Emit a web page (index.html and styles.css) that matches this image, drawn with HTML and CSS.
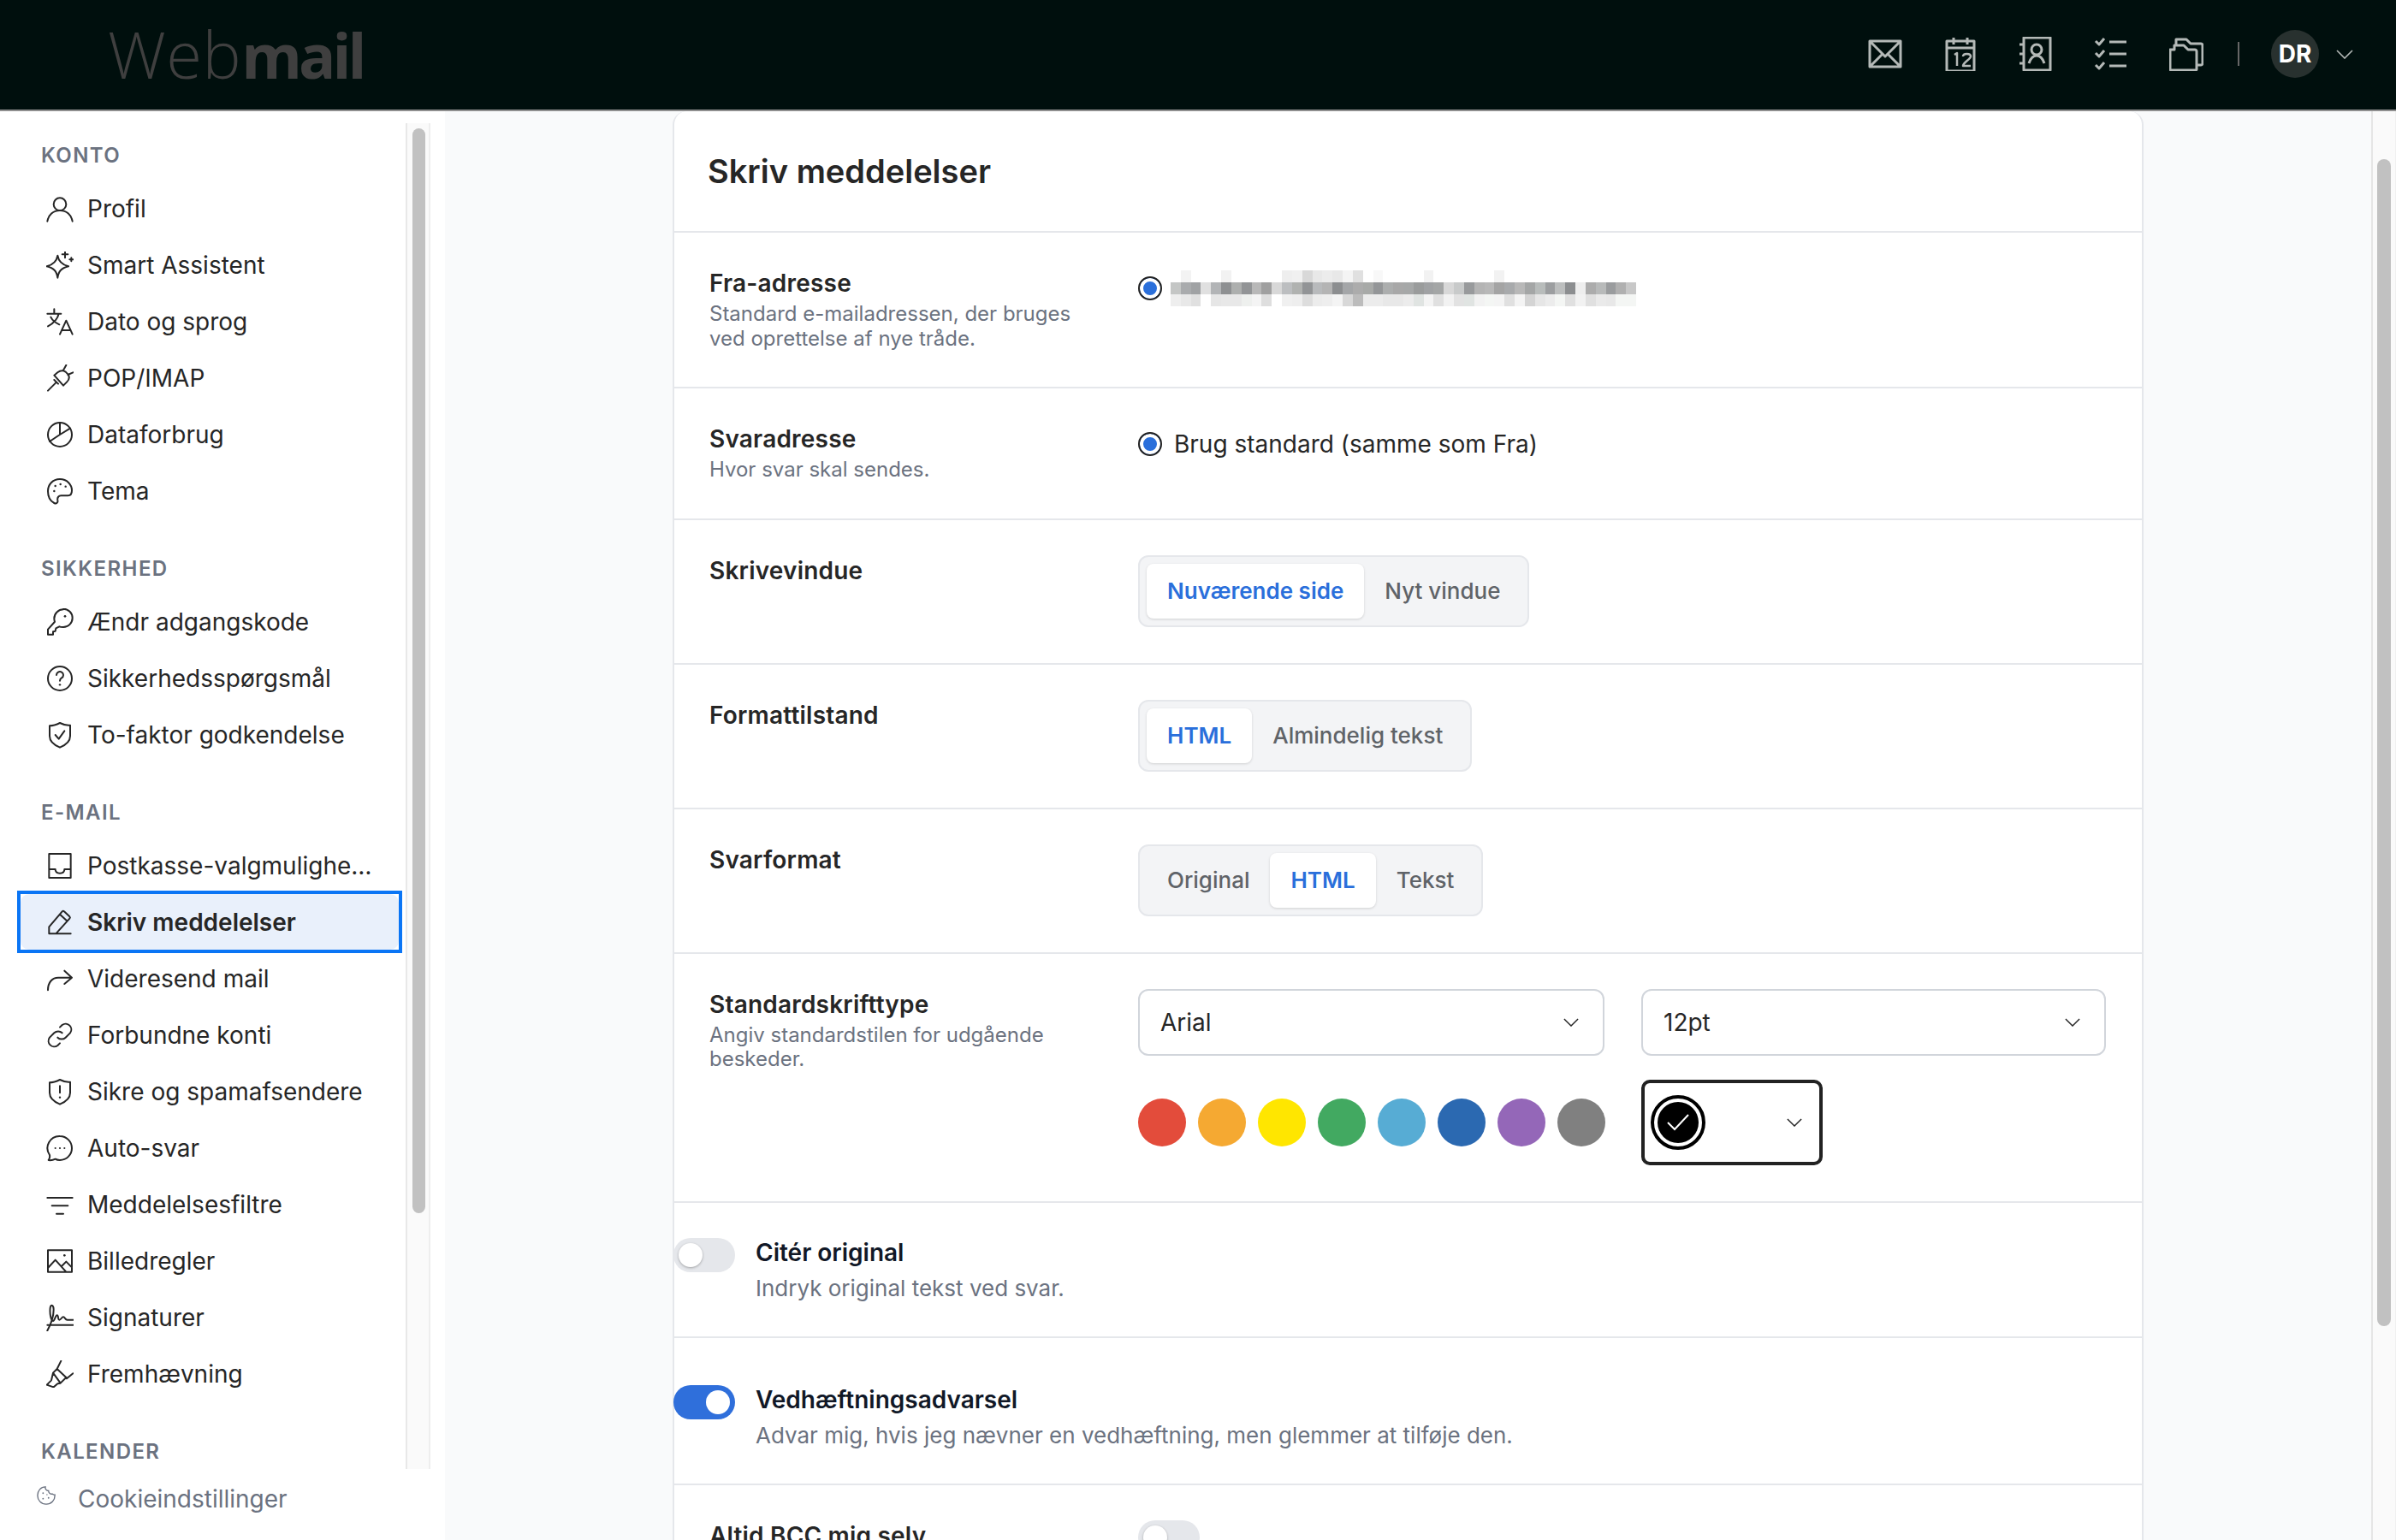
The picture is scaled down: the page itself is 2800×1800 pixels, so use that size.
FILE: index.html
```html
<!DOCTYPE html>
<html lang="da">
<head>
    <meta charset="UTF-8">
    <title>Skriv meddelelser</title>
    <link rel="stylesheet" href="styles.css">
</head>
<body>
    <header class="topbar">
        <div class="logo"><span class="logo-light">Web</span><span class="logo-bold">mail</span></div>
        <div class="top-actions">
            <svg class="top-icon" viewBox="0 0 40 40"><path d="M2 5h36v30H2zM2 5l18 18L38 5M2 35l15-15M38 35L23 20"/></svg>
            <svg class="top-icon" viewBox="0 0 40 40"><path d="M4 5h32v35H4zM4 13h32M12 1v8M28 1v8"/><path class="thin" d="M13 21l3-2v15M23 23c0-4 9-4 9 0 0 3-9 7-9 11h9"/></svg>
            <svg class="top-icon" viewBox="0 0 40 40"><path d="M6 1h31v38H6zM1 9h5M1 20h5M1 31h5"/><circle cx="21" cy="15" r="6"/><path d="M12 31c2-6 5-9 9-9s7 3 9 9"/></svg>
            <svg class="top-icon" viewBox="0 0 40 40"><path d="M2 5l4 4 6-7M2 19l4 4 6-7M2 33l4 4 6-7M18 6h20M18 20h20M18 34h20"/></svg>
            <svg class="top-icon" viewBox="0 0 40 40"><path d="M1 15h5V10h11l5 5h8c1 0 2 1 2 2v21c0 1-1 1-2 1H3c-1 0-2 0-2-1zM8 10V3h12l5 5h12c1 0 2 1 2 2v21c0 1-1 2-2 2h-5"/></svg>
            <span class="top-divider"></span>
            <span class="avatar">DR</span>
            <svg class="user-chevron" viewBox="0 0 20 11"><path d="M1 1l9 9 9-9"/></svg>
        </div>
    </header>

    <div class="layout">
        <aside class="sidebar">
            <div class="sidebar-scroll">
                <nav class="nav">
                    <h4 class="nav-label">Konto</h4>
                    <a class="nav-item"><svg class="nav-icon" viewBox="0 0 24 24"><circle cx="12" cy="8" r="5.500"/><path d="M1 23c1-5.500 5-9.500 11-9.500s10 4 11 9.500"/></svg><span>Profil</span></a>
                    <a class="nav-item"><svg class="nav-icon" viewBox="0 0 24 24"><path d="M10 3.500c.8 5 3.500 8 9.500 9.500-6 1.500-8.700 4-9.500 10-.8-6-3.500-8.500-9.500-10 6-1.500 8.700-4.500 9.500-9.500zM16.500 0v5.500M14 2.500h5M22 5.500v3M20.500 7h3"/></svg><span>Smart Assistent</span></a>
                    <a class="nav-item"><svg class="nav-icon" viewBox="0 0 24 24"><path d="M1 5h12M7 1v4M11 5c-1 4.500-4 8-9.500 11M4 8c1.500 3 4 5 7.500 6.500M12 23l5.500-12 5.500 12M13.500 19.500h8"/></svg><span>Dato og sprog</span></a>
                    <a class="nav-item"><svg class="nav-icon" viewBox="0 0 24 24"><path d="M7 9.500l8 9 3-3c2.500-2.500 2.500-5 1-7l-2-2c-2-1.500-4.500-1.500-7 .5zM15 5l2.500-4.500M19 9l4.500-2M10.500 17L7 13.500M9 15.500L1.500 23"/></svg><span>POP/IMAP</span></a>
                    <a class="nav-item"><svg class="nav-icon" viewBox="0 0 24 24"><circle cx="12" cy="12" r="10.500"/><path d="M12 1.500V12l-9 6M12 12l9-5.500"/></svg><span>Dataforbrug</span></a>
                    <a class="nav-item"><svg class="nav-icon" viewBox="0 0 24 24"><path d="M12 1.500C5.500 1.500 1.500 6.500 1.500 12c0 5.500 2.500 9 5.500 10.500 2 1 3.500-.5 3-2.500-.5-2.500 1-4 3-4h6c2.500 0 3.500-2 3.500-4.500C22.500 6 18 1.500 12 1.500z"/><circle class="dot" cx="7" cy="12" r=".9"/><circle class="dot" cx="8" cy="7.500" r=".9"/><circle class="dot" cx="12.500" cy="6" r=".9"/><circle class="dot" cx="17" cy="8" r=".9"/></svg><span>Tema</span></a>

                    <h4 class="nav-label">Sikkerhed</h4>
                    <a class="nav-item"><svg class="nav-icon" viewBox="0 0 24 24"><path d="M15 1a8 8 0 0 0-8 8c0 1 .2 2 .5 2.800L1.500 18.500V23H6v-2.500l2-.5.500-2.500 3-1.500c1 .5 2.200.5 3.500.5a8 8 0 0 0 0-16z"/><circle class="dot" cx="16.500" cy="7" r="1"/></svg><span>Ændr adgangskode</span></a>
                    <a class="nav-item"><svg class="nav-icon" viewBox="0 0 24 24"><circle cx="12" cy="12" r="10.500"/><path d="M9 9a3 3 0 1 1 4.500 2.600c-1 .6-1.500 1.200-1.500 2.400"/><circle class="dot" cx="12" cy="17.500" r=".9"/></svg><span>Sikkerhedsspørgsmål</span></a>
                    <a class="nav-item"><svg class="nav-icon" viewBox="0 0 24 24"><path d="M3 4c4 0 6-1 9-2.500C15 3 17 4 21 3.500V13c0 4.500-4 8-9 10-5-2-9-5.500-9-10zM8 12l3 3.500 5-7"/></svg><span>To-faktor godkendelse</span></a>

                    <h4 class="nav-label">E-mail</h4>
                    <a class="nav-item"><svg class="nav-icon" viewBox="0 0 24 24"><path d="M2.500 1.500h19v21h-19zM2.500 15H8c0 2.500 2 3.500 4 3.500s4-1 4-3.500h5.500"/></svg><span class="nav-text">Postkasse-valgmuligheder</span></a>
                    <a class="nav-item active"><svg class="nav-icon" viewBox="0 0 24 24"><path d="M2.500 22v-6L14 2.500c.5-.5 1.200-.5 1.700 0l4.800 4.500c.5.500.5 1.200 0 1.700L8.500 22zM2.500 22h19M12 5l6.500 6"/></svg><span>Skriv meddelelser</span></a>
                    <a class="nav-item"><svg class="nav-icon" viewBox="0 0 24 24"><path d="M1.500 22c0-7 4-11 9-11h12M16 5l6.500 6-6.500 5.500"/></svg><span>Videresend mail</span></a>
                    <a class="nav-item"><svg class="nav-icon" viewBox="0 0 24 24"><path d="M10 14a5 5 0 0 0 7 0l4-4a5 5 0 0 0-7-7l-2 2M14 10a5 5 0 0 0-7 0l-4 4a5 5 0 0 0 7 7l2-2"/></svg><span>Forbundne konti</span></a>
                    <a class="nav-item"><svg class="nav-icon" viewBox="0 0 24 24"><path d="M3 4c4 0 6-1 9-2.500C15 3 17 4 21 3.500V13c0 4.500-4 8-9 10-5-2-9-5.500-9-10zM12 7v6"/><circle class="dot" cx="12" cy="17" r=".9"/></svg><span>Sikre og spamafsendere</span></a>
                    <a class="nav-item"><svg class="nav-icon" viewBox="0 0 24 24"><path d="M12 1.500a10.500 10.500 0 0 1 0 21c-1.500 0-3-.3-4-1-2 1-4 1.300-6 1 1-1.200 1.300-2.800 1-4.500A10.500 10.500 0 0 1 12 1.500z"/><circle class="dot" cx="8" cy="12" r=".8"/><circle class="dot" cx="12" cy="12" r=".8"/><circle class="dot" cx="16" cy="12" r=".8"/></svg><span>Auto-svar</span></a>
                    <a class="nav-item"><svg class="nav-icon" viewBox="0 0 24 24"><path d="M1 6h22M5 13h14M9 20h6"/></svg><span>Meddelelsesfiltre</span></a>
                    <a class="nav-item"><svg class="nav-icon" viewBox="0 0 24 24"><path d="M1.500 2.500h21v19h-21zM1.500 18l6.500-7 9.500 10.500M13.500 16.500l4-4 5 5"/><circle class="dot" cx="16" cy="7" r="1"/></svg><span>Billedregler</span></a>
                    <a class="nav-item"><svg class="nav-icon" viewBox="0 0 24 24"><path d="M1 23.500C4 18 6.500 10 6.500 5c0-4-2.500-5-3-1.500C3 8 4 15 6 15c1.500 0 2-5 3.500-5S10 14 11.500 14s2-2.500 3.500-2.500 1.500 2.500 3.500 2.500h5M1 18.500h22.500"/></svg><span>Signaturer</span></a>
                    <a class="nav-item"><svg class="nav-icon" viewBox="0 0 24 24"><path d="M13 .5L9.500 7.500M6 11l3.500-3.500 8 7.500-5 5zM6 11l-1.500 6.500L.5 21.500l6 2 3.500-3 2.500-.5M18 16l5.500-4.500"/></svg><span>Fremhævning</span></a>

                    <h4 class="nav-label">Kalender</h4>
                </nav>
                <div class="side-track"><div class="side-thumb"></div></div>
            </div>
            <div class="cookie-bar">
                <svg class="cookie-icon" viewBox="0 0 24 24"><path d="M11 1a4 4 0 0 0 4 5 4 4 0 0 0 5 4 3 3 0 0 0 3 1c.5 7-4.500 12-11 12S1 18 1 12 5 1 11 1z"/><circle class="dot" cx="8" cy="9" r="1"/><circle class="dot" cx="15" cy="15" r="1"/><circle class="dot" cx="8" cy="16" r="1"/><circle class="dot" cx="13" cy="11" r=".8"/></svg>
                <span>Cookieindstillinger</span>
            </div>
        </aside>

        <main class="main">
            <div class="content">
                <section class="card">
                    <h2 class="card-title">Skriv meddelelser</h2>

                    <div class="row">
                        <div>
                            <div class="row-label">Fra-adresse</div>
                            <div class="row-help">Standard e-mailadressen, der bruges ved oprettelse af nye tråde.</div>
                        </div>
                        <div class="radio-line">
                            <span class="radio"></span>
                            <svg class="mosaic" viewBox="0 0 46 3" preserveAspectRatio="none" shape-rendering="crispEdges">
                                <g class="m-top">
                                    <rect x="1" y="0" width="1" height="1" fill="#f3f3f3"/><rect x="5" y="0" width="1" height="1" fill="#f2f2f2"/><rect x="11" y="0" width="1" height="1" fill="#eeeeee"/><rect x="12" y="0" width="1" height="1" fill="#f0f0f0"/><rect x="13" y="0" width="1" height="1" fill="#d8d8d8"/><rect x="14" y="0" width="1" height="1" fill="#e8e8e8"/><rect x="15" y="0" width="1" height="1" fill="#ececec"/><rect x="16" y="0" width="1" height="1" fill="#e8e8e8"/><rect x="17" y="0" width="1" height="1" fill="#f4f4f4"/><rect x="18" y="0" width="1" height="1" fill="#e0e0e0"/><rect x="20" y="0" width="1" height="1" fill="#f8f8f8"/><rect x="25" y="0" width="1" height="1" fill="#f2f2f2"/><rect x="32" y="0" width="1" height="1" fill="#f2f2f2"/>
                                </g>
                                <g class="m-mid">
                                    <rect x="0" y="1" width="1" height="1" fill="#c4c6c5"/><rect x="1" y="1" width="1" height="1" fill="#a9abad"/><rect x="2" y="1" width="1" height="1" fill="#a0a2a4"/><rect x="3" y="1" width="1" height="1" fill="#e0e0e0"/><rect x="4" y="1" width="1" height="1" fill="#b2b4b6"/><rect x="5" y="1" width="1" height="1" fill="#8e9092"/><rect x="6" y="1" width="1" height="1" fill="#adafae"/><rect x="7" y="1" width="1" height="1" fill="#929496"/><rect x="8" y="1" width="1" height="1" fill="#b8b8b8"/><rect x="9" y="1" width="1" height="1" fill="#a0a0a0"/><rect x="10" y="1" width="1" height="1" fill="#d8d8d8"/><rect x="11" y="1" width="1" height="1" fill="#bcbec0"/><rect x="12" y="1" width="1" height="1" fill="#b0b2b0"/><rect x="13" y="1" width="1" height="1" fill="#929496"/><rect x="14" y="1" width="1" height="1" fill="#b8babc"/><rect x="15" y="1" width="1" height="1" fill="#b4b4b4"/><rect x="16" y="1" width="1" height="1" fill="#8c8e90"/><rect x="17" y="1" width="1" height="1" fill="#a4a6a8"/><rect x="18" y="1" width="1" height="1" fill="#acacac"/><rect x="19" y="1" width="1" height="1" fill="#a8aaa8"/><rect x="20" y="1" width="1" height="1" fill="#949698"/><rect x="21" y="1" width="1" height="1" fill="#acaeae"/><rect x="22" y="1" width="1" height="1" fill="#a8a8a8"/><rect x="23" y="1" width="1" height="1" fill="#a6a8a8"/><rect x="24" y="1" width="1" height="1" fill="#9a9c9c"/><rect x="25" y="1" width="1" height="1" fill="#a0a2a4"/><rect x="26" y="1" width="1" height="1" fill="#a4a6a6"/><rect x="27" y="1" width="1" height="1" fill="#d8d8d8"/><rect x="28" y="1" width="1" height="1" fill="#c8caca"/><rect x="29" y="1" width="1" height="1" fill="#989a9c"/><rect x="30" y="1" width="1" height="1" fill="#b4b4b4"/><rect x="31" y="1" width="1" height="1" fill="#b8b8b8"/><rect x="32" y="1" width="1" height="1" fill="#a4a4a4"/><rect x="33" y="1" width="1" height="1" fill="#a8aaac"/><rect x="34" y="1" width="1" height="1" fill="#b8b8b8"/><rect x="35" y="1" width="1" height="1" fill="#a4a6a6"/><rect x="36" y="1" width="1" height="1" fill="#b8bcbb"/><rect x="37" y="1" width="1" height="1" fill="#9c9ea0"/><rect x="38" y="1" width="1" height="1" fill="#bcbebe"/><rect x="39" y="1" width="1" height="1" fill="#8c8e90"/><rect x="40" y="1" width="1" height="1" fill="#eeeeee"/><rect x="41" y="1" width="1" height="1" fill="#acacac"/><rect x="42" y="1" width="1" height="1" fill="#b8baba"/><rect x="43" y="1" width="1" height="1" fill="#9a9c9e"/><rect x="44" y="1" width="1" height="1" fill="#b0b0b0"/><rect x="45" y="1" width="1" height="1" fill="#c8c8c8"/>
                                </g>
                                <g class="m-bottom">
                                    <rect x="0" y="2" width="1" height="1" fill="#eeeeee"/><rect x="1" y="2" width="1" height="1" fill="#e8e8e8"/><rect x="2" y="2" width="1" height="1" fill="#e0e0e0"/><rect x="4" y="2" width="1" height="1" fill="#e6e6e6"/><rect x="5" y="2" width="1" height="1" fill="#e8e8e8"/><rect x="6" y="2" width="1" height="1" fill="#e8e8e8"/><rect x="7" y="2" width="1" height="1" fill="#eef0ee"/><rect x="8" y="2" width="1" height="1" fill="#f4f4f4"/><rect x="9" y="2" width="1" height="1" fill="#dedede"/><rect x="11" y="2" width="1" height="1" fill="#f0f0f0"/><rect x="12" y="2" width="1" height="1" fill="#eeeeee"/><rect x="13" y="2" width="1" height="1" fill="#dddddd"/><rect x="14" y="2" width="1" height="1" fill="#ececec"/><rect x="15" y="2" width="1" height="1" fill="#eeeeee"/><rect x="16" y="2" width="1" height="1" fill="#f4f4f4"/><rect x="17" y="2" width="1" height="1" fill="#d8d8d8"/><rect x="18" y="2" width="1" height="1" fill="#bcbcbc"/><rect x="19" y="2" width="1" height="1" fill="#ececec"/><rect x="20" y="2" width="1" height="1" fill="#ececec"/><rect x="21" y="2" width="1" height="1" fill="#e8e8e8"/><rect x="22" y="2" width="1" height="1" fill="#e8e8e8"/><rect x="23" y="2" width="1" height="1" fill="#ececec"/><rect x="24" y="2" width="1" height="1" fill="#e0e4e2"/><rect x="25" y="2" width="1" height="1" fill="#f4f4f4"/><rect x="26" y="2" width="1" height="1" fill="#e0e0e0"/><rect x="27" y="2" width="1" height="1" fill="#f2f2f2"/><rect x="28" y="2" width="1" height="1" fill="#e2e2e2"/><rect x="29" y="2" width="1" height="1" fill="#e0e4e2"/><rect x="30" y="2" width="1" height="1" fill="#f2f2f2"/><rect x="31" y="2" width="1" height="1" fill="#f4f6f4"/><rect x="32" y="2" width="1" height="1" fill="#f4f4f4"/><rect x="33" y="2" width="1" height="1" fill="#e0e0e0"/><rect x="34" y="2" width="1" height="1" fill="#f4f4f4"/><rect x="35" y="2" width="1" height="1" fill="#d4d4d4"/><rect x="36" y="2" width="1" height="1" fill="#e6e6e6"/><rect x="37" y="2" width="1" height="1" fill="#ececec"/><rect x="38" y="2" width="1" height="1" fill="#f4f6f4"/><rect x="39" y="2" width="1" height="1" fill="#e0e0e0"/><rect x="40" y="2" width="1" height="1" fill="#f2f2f2"/><rect x="41" y="2" width="1" height="1" fill="#e0e0e0"/><rect x="42" y="2" width="1" height="1" fill="#eaeaea"/><rect x="43" y="2" width="1" height="1" fill="#e8e8e8"/><rect x="44" y="2" width="1" height="1" fill="#f4f6f4"/><rect x="45" y="2" width="1" height="1" fill="#f4f6f4"/>
                                </g>
                            </svg>
                        </div>
                    </div>

                    <div class="row">
                        <div>
                            <div class="row-label">Svaradresse</div>
                            <div class="row-help">Hvor svar skal sendes.</div>
                        </div>
                        <div class="radio-line radio-line-text">
                            <span class="radio"></span>
                            <span>Brug standard (samme som Fra)</span>
                        </div>
                    </div>

                    <div class="row">
                        <div class="row-label">Skrivevindue</div>
                        <div class="segmented">
                            <span class="segment selected">Nuværende side</span>
                            <span class="segment">Nyt vindue</span>
                        </div>
                    </div>

                    <div class="row">
                        <div class="row-label">Formattilstand</div>
                        <div class="segmented">
                            <span class="segment selected">HTML</span>
                            <span class="segment">Almindelig tekst</span>
                        </div>
                    </div>

                    <div class="row">
                        <div class="row-label">Svarformat</div>
                        <div class="segmented">
                            <span class="segment">Original</span>
                            <span class="segment selected">HTML</span>
                            <span class="segment">Tekst</span>
                        </div>
                    </div>

                    <div class="row">
                        <div>
                            <div class="row-label">Standardskrifttype</div>
                            <div class="row-help">Angiv standardstilen for udgående beskeder.</div>
                        </div>
                        <div class="font-grid">
                            <div class="select"><span>Arial</span><svg class="chevron" viewBox="0 0 20 11"><path d="M1 1l9 9 9-9"/></svg></div>
                            <div class="select"><span>12pt</span><svg class="chevron" viewBox="0 0 20 11"><path d="M1 1l9 9 9-9"/></svg></div>
                            <div class="swatches">
                                <span class="swatch swatch-red"></span>
                                <span class="swatch swatch-orange"></span>
                                <span class="swatch swatch-yellow"></span>
                                <span class="swatch swatch-green"></span>
                                <span class="swatch swatch-sky"></span>
                                <span class="swatch swatch-blue"></span>
                                <span class="swatch swatch-purple"></span>
                                <span class="swatch swatch-grey"></span>
                            </div>
                            <div class="color-select">
                                <span class="color-ring">
                                    <svg viewBox="0 0 48 48"><circle cx="24" cy="24" r="24"/><path d="M12 24l8 8 16-17"/></svg>
                                </span>
                                <svg class="chevron" viewBox="0 0 20 11"><path d="M1 1l9 9 9-9"/></svg>
                            </div>
                        </div>
                    </div>

                    <div class="row row-toggle">
                        <span class="toggle"></span>
                        <div>
                            <div class="toggle-title">Citér original</div>
                            <div class="toggle-help">Indryk original tekst ved svar.</div>
                        </div>
                    </div>

                    <div class="row row-toggle row-toggle-low">
                        <span class="toggle on"></span>
                        <div>
                            <div class="toggle-title">Vedhæftningsadvarsel</div>
                            <div class="toggle-help">Advar mig, hvis jeg nævner en vedhæftning, men glemmer at tilføje den.</div>
                        </div>
                    </div>

                    <div class="row">
                        <div class="row-label">Altid BCC mig selv</div>
                        <div><span class="toggle"></span></div>
                    </div>
                </section>
            </div>
            <div class="main-track"><div class="main-thumb"></div></div>
        </main>
    </div>
</body>
</html>
```

FILE: styles.css
```css
* {
    margin: 0;
    padding: 0;
    box-sizing: border-box;
}

html, body {
    height: 100%;
    overflow: hidden;
}

body {
    display: flex;
    flex-direction: column;
    font-family: 'Inter', 'Liberation Sans', sans-serif;
    font-size: 28px;
    color: #262626;
    background: #f9fafb;
}

/* top bar */
.topbar {
    flex: none;
    height: 130px;
    display: flex;
    justify-content: space-between;
    align-items: center;
    padding: 0 50px 2px 126px;
    background: #000f0d;
    border-bottom: 2px solid #8f8f8f;
}

.logo {
    font-family: 'Open Sans', sans-serif;
    font-size: 76px;
    line-height: 1;
    color: #3f3f3f;
}

.logo-light {
    font-weight: 300;
    letter-spacing: 0.5px;
}

.logo-bold {
    font-size: 72px;
    font-weight: 700;
    letter-spacing: -4px;
}

.top-actions {
    display: flex;
    align-items: center;
}

.top-icon {
    width: 40px;
    height: 40px;
    margin-right: 48px;
    fill: none;
    stroke: #b4b9b7;
    stroke-width: 3;
    stroke-linejoin: round;
}

.top-icon .thin { stroke-width: 2.5; }

.top-divider {
    width: 2px;
    height: 28px;
    margin: 0 37px 0 -8px;
    background: #666;
}

.avatar {
    width: 56px;
    height: 56px;
    display: flex;
    align-items: center;
    justify-content: center;
    border-radius: 50%;
    background: #28312f;
    color: #fff;
    font-weight: 700;
}

.user-chevron {
    width: 20px;
    height: 11px;
    margin-left: 20px;
    fill: none;
    stroke: #b4b9b7;
    stroke-width: 1.6;
}

.layout {
    flex: 1;
    display: flex;
    min-height: 0;
}

/* sidebar */
.sidebar {
    flex: none;
    width: 520px;
    display: flex;
    flex-direction: column;
    background: #fff;
    padding-top: 14px;
}

.sidebar-scroll {
    flex: 1;
    min-height: 0;
    display: flex;
    padding-right: 17px;
}

.nav {
    width: 474px;
    overflow: hidden;
    padding-top: 20px;
}

.nav-label {
    height: 36px;
    margin: 41px 0 11px 48px;
    font-size: 24px;
    line-height: 36px;
    font-weight: 600;
    letter-spacing: 1.4px;
    text-transform: uppercase;
    color: #6b7280;
}

.nav-label:first-child {
    margin-top: 0;
}

.nav-item {
    position: relative;
    height: 65px;
    margin: 0 8px 1px 24px;
    padding-left: 30px;
    display: flex;
    align-items: center;
    gap: 16px;
    white-space: nowrap;
}

.nav-item.active {
    outline: 4px solid #0a75f5;
    font-weight: 600;
}

/* rounded fill inside the square focus frame */
.nav-item.active::before {
    content: "";
    position: absolute;
    inset: 0;
    z-index: 0;
    border-radius: 10px;
    background: #e9f0fb;
}

.nav-item > * {
    position: relative;
}

.nav-text {
    max-width: 336px;
    overflow: hidden;
    text-overflow: ellipsis;
}

.nav-icon {
    flex: none;
    width: 32px;
    height: 32px;
    fill: none;
    stroke: #262626;
    stroke-width: 1.500;
    stroke-linecap: round;
    stroke-linejoin: round;
}

.dot {
    fill: currentColor;
    stroke: none;
}

.side-track {
    width: 29px;
    padding: 6px 6px 0 6px;
    background: #fafafa;
    border-left: 2px solid #e8e8e8;
    border-right: 2px solid #eeeeee;
}

.side-thumb {
    width: 15px;
    height: 1268px;
    border-radius: 8px;
    background: #c1c1c1;
}

.cookie-bar {
    flex: none;
    height: 83px;
    display: flex;
    align-items: flex-start;
    gap: 26px;
    padding: 15px 0 0 43px;
    color: #6b7280;
}

.cookie-bar span {
    font-size: 28px;
    line-height: 40px;
}

.cookie-icon {
    width: 22px;
    height: 22px;
    margin-top: 5px;
    fill: none;
    stroke: #6b7280;
    stroke-width: 1.500;
}

/* main */
.main {
    flex: 1;
    min-width: 0;
    display: flex;
}

.content {
    flex: 1;
    min-width: 0;
    display: flex;
    justify-content: center;
    align-items: flex-start;
    overflow: hidden;
}

.main-track {
    flex: none;
    width: 29px;
    padding: 56px 0 0 5px;
    background: #fafafa;
    border-left: 2px solid #e5e5e5;
    border-right: 1px solid #f0f0f0;
}

.main-thumb {
    width: 16px;
    height: 1364px;
    border-radius: 8px;
    background: #c1c1c1;
}

.card {
    flex: none;
    width: 1719px;
    background: #fff;
    border: 2px solid #e5e7eb;
    border-top: 0;
    border-radius: 16px 16px 0 0;
}

.card-title {
    height: 140px;
    padding-left: 39px;
    font-size: 38px;
    line-height: 140px;
    font-weight: 600;
    color: #262626;
}

.row {
    display: grid;
    grid-template-columns: 440px 1fr;
    column-gap: 61px;
    align-items: start;
    padding: 41px 42px 42px 41px;
    border-top: 2px solid #e5e7eb;
}

.row-label {
    margin: -2px 0 2px;
    font-weight: 600;
    line-height: 40px;
    letter-spacing: 0.2px;
}

.row-help {
    font-size: 24px;
    line-height: 28.500px;
    color: #6b7280;
}

/* radios */
.radio-line {
    display: flex;
    align-items: center;
    gap: 10px;
    margin-top: 3px;
}

.radio-line-text {
    gap: 14px;
    margin-top: 7px;
}

.radio {
    flex: none;
    width: 28px;
    height: 28px;
    border: 2px solid #222;
    border-radius: 50%;
    background: #2a6fdb;
    box-shadow: inset 0 0 0 4px #fff;
}

.mosaic {
    width: 544px;
    height: 42px;
}

/* segmented buttons */
.segmented {
    display: inline-flex;
    justify-self: start;
    height: 84px;
    padding: 8px;
    background: #f3f4f6;
    border: 2px solid #e5e7eb;
    border-radius: 12px;
    font-size: 26px;
}

.segment {
    display: flex;
    align-items: center;
    padding: 0 24px;
    border-radius: 8px;
    font-weight: 500;
    color: #5f6368;
}

.segment.selected {
    background: #fff;
    color: #2a6fdb;
    font-weight: 600;
    box-shadow: 0 1px 3px rgba(0,0,0,0.15);
}

/* font settings */
.font-grid {
    display: grid;
    grid-template-columns: 545px 543px;
    column-gap: 43px;
    row-gap: 28px;
    align-items: center;
}

.select {
    height: 78px;
    display: flex;
    justify-content: space-between;
    align-items: center;
    padding: 0 28px 0 24px;
    background: #fff;
    border: 2px solid #d1d5db;
    border-radius: 12px;
}

.chevron {
    width: 18px;
    height: 10px;
    fill: none;
    stroke: #262626;
    stroke-width: 1.600;
}

.swatches {
    display: flex;
    gap: 14px;
}

.swatch {
    flex: none;
    width: 56px;
    height: 56px;
    border-radius: 50%;
}

.swatch-red { background: #e34c3b; }
.swatch-orange { background: #f5a932; }
.swatch-yellow { background: #ffe600; }
.swatch-green { background: #42a961; }
.swatch-sky { background: #57acd4; }
.swatch-blue { background: #2b69b1; }
.swatch-purple { background: #9467b8; }
.swatch-grey { background: #808080; }

.color-select {
    width: 212px;
    height: 100px;
    display: flex;
    justify-content: space-between;
    align-items: center;
    padding: 0 20px 0 7px;
    border: 4px solid #222;
    border-radius: 10px;
}

.color-ring {
    width: 64px;
    height: 64px;
    padding: 4px;
    border: 4px solid #000;
    border-radius: 50%;
}

.color-ring svg {
    display: block;
    width: 48px;
    height: 48px;
    fill: #000;
}

.color-ring path {
    fill: none;
    stroke: #fff;
    stroke-width: 2;
}

/* toggles */
.toggle {
    display: block;
    position: relative;
    width: 72px;
    height: 40px;
    border-radius: 20px;
    background: #e5e7eb;
}

.toggle::after {
    content: "";
    position: absolute;
    top: 6px;
    left: 6px;
    width: 28px;
    height: 28px;
    border-radius: 50%;
    background: #fff;
    box-shadow: 0 1px 3px rgba(0,0,0,0.3);
}

.toggle.on {
    background: #2f6fdb;
}

.toggle.on::after {
    left: 38px;
    box-shadow: none;
}

.row-toggle {
    grid-template-columns: 72px 1fr;
    column-gap: 24px;
    padding: 38px 0 36px;
    margin-left: -1px;
}

.row-toggle .toggle {
    margin-top: 3px;
}

.row-toggle-low {
    padding-top: 52px;
}

.toggle-title {
    font-weight: 600;
    line-height: 40px;
    color: #111827;
}

.toggle-help {
    margin-top: 2px;
    line-height: 40px;
    font-size: 26px;
    color: #6b7280;
}
```
